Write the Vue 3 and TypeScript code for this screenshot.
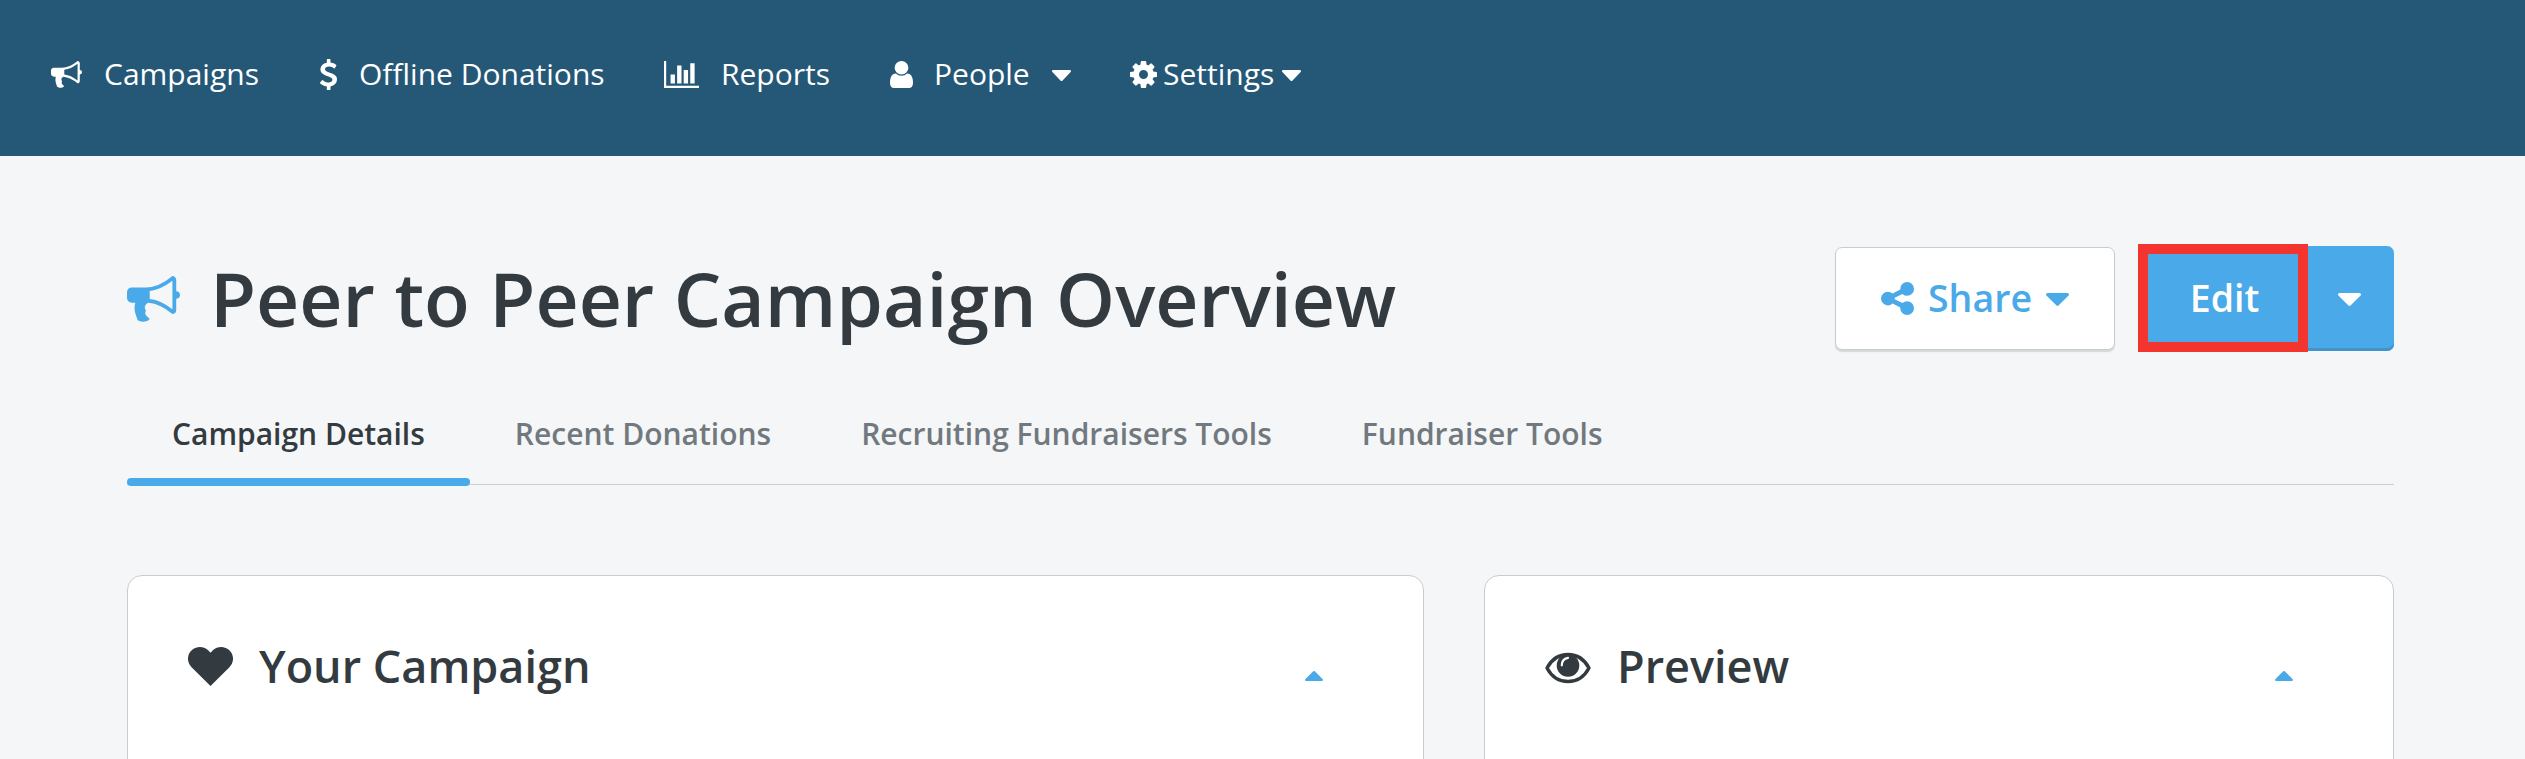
<script setup lang="ts">
interface Glyph {
  box: string
  path: string
}

const glyphs: Record<string, Glyph> = {
  bullhorn: {
    box: '0 128 1792 1546',
    path: 'M1664 640q53 0 90.5 37.5t37.5 90.5-37.5 90.5-90.5 37.5v384q0 52-38 90t-90 38q-417-347-812-380-58 19-91 66t-31 100.5 40 92.5q-20 33-23 65.5t6 58 33.5 55 48 50 61.5 50.5q-29 58-111.5 83t-168.5 11.5-132-55.5q-7-23-29.5-87.5t-32-94.5-23-89-15-101 3.5-98.5 22-110.5h-122q-66 0-113-47t-47-113v-192q0-66 47-113t113-47h480q435 0 896-384 52 0 90 38t38 90v384zm-128 604v-954q-394 302-768 343v270q377 42 768 341z',
  },
  dollar: {
    box: '430 0 932 1792',
    path: 'M1362 1185q0 153-99.5 263.5t-258.5 136.5v175q0 14-9 23t-23 9h-135q-13 0-22.5-9.5t-9.5-22.5v-175q-66-9-127.5-31t-101.5-44.5-74-48-46.5-37.5-17.5-18q-17-21-2-41l103-135q7-10 23-12 15-2 24 9l2 2q113 99 243 125 37 8 74 8 81 0 142.5-43t61.5-122q0-28-15-53t-33.5-42-58.5-37.5-66-32-80-32.5q-39-16-61.5-25t-61.5-26.5-62.5-31-56.5-35.5-53.5-42.5-43.5-49-35.5-58-21-66.5-8.5-78q0-138 98-242t255-134v-180q0-13 9.5-22.5t22.5-9.5h135q14 0 23 9t9 23v176q57 6 110.5 23t87 33.5 63.5 37.5 39 29 15 14q17 18 5 38l-81 146q-8 15-23 16-14 3-27-7-3-3-14.5-12t-39-26.5-58.5-32-74.5-26-85.5-11.5q-95 0-155 43t-60 111q0 26 8.5 48t29.5 41.5 39.5 33 56 31 60.5 27 70 27.5q53 20 81 31.5t76 35 75.5 42.5 62 50 53 63.5 31.5 76.5 13 94z',
  },
  chart: {
    box: '0 128 2048 1536',
    path: 'M640 896v512h-256v-512h256zm384-512v1024h-256v-1024h256zm1024 1152v128h-2048v-1536h128v1408h1920zm-640-896v768h-256v-768h256zm384-384v1152h-256v-1152h256z',
  },
  user: {
    box: '256 128 1280 1536',
    path: 'M1536 1399q0 109-62.5 187t-150.5 78h-854q-88 0-150.5-78t-62.5-187q0-85 8.5-160.5t31.5-152 58.5-131 94-89 134.5-34.5q131 128 313 128t313-128q76 0 134.5 34.5t94 89 58.5 131 31.5 152 8.5 160.5zm-256-887q0 159-112.5 271.5t-271.5 112.5-271.5-112.5-112.5-271.5 112.5-271.5 271.5-112.5 271.5 112.5 112.5 271.5z',
  },
  cog: {
    box: '128 128 1536 1536',
    path: 'M1152 896q0-106-75-181t-181-75-181 75-75 181 75 181 181 75 181-75 75-181zm512-109v222q0 12-8 23t-20 13l-185 28q-19 54-39 91 35 50 107 138 10 12 10 25t-9 23q-27 37-99 108t-94 71q-12 0-26-9l-138-108q-44 23-91 38-16 136-29 186-7 28-36 28h-222q-14 0-24.5-8.5t-11.5-21.5l-28-184q-49-16-90-37l-141 107q-10 9-25 9-14 0-25-11-126-114-165-168-7-10-7-23 0-12 8-23 15-21 51-66.5t54-70.5q-27-50-41-99l-183-27q-13-2-21-12.5t-8-23.5v-222q0-12 8-23t19-13l186-28q14-46 39-92-40-57-107-138-10-12-10-24 0-10 9-23 26-36 98.5-107.5t94.5-71.5q13 0 26 10l138 107q44-23 91-38 16-136 29-186 7-28 36-28h222q14 0 24.5 8.5t11.5 21.5l28 184q49 16 90 37l142-107q9-9 24-9 13 0 25 10 129 119 165 170 7 8 7 22 0 12-8 23-15 21-51 66.5t-54 70.5q26 50 41 98l183 28q13 2 21 12.5t8 23.5z',
  },
  share: {
    box: '128 128 1536 1536',
    path: 'M1344 1024q133 0 226.5 93.5t93.5 226.5-93.5 226.5-226.5 93.5-226.5-93.5-93.5-226.5q0-12 2-34l-360-180q-92 86-218 86-133 0-226.5-93.5t-93.5-226.5 93.5-226.5 226.5-93.5q126 0 218 86l360-180q-2-22-2-34 0-133 93.5-226.5t226.5-93.5 226.5 93.5 93.5 226.5-93.5 226.5-226.5 93.5q-126 0-218-86l-360 180q2 22 2 34t-2 34l360 180q92-86 218-86z',
  },
  down: {
    box: '384 640 1024 576',
    path: 'M1408 704q0 26-19 45l-448 448q-19 19-45 19t-45-19l-448-448q-19-19-19-45t19-45 45-19h896q26 0 45 19t19 45z',
  },
  up: {
    box: '384 704 1024 576',
    path: 'M1408 1216q0 26-19 45t-45 19h-896q-26 0-45-19t-19-45 19-45l448-448q19-19 45-19t45 19l448 448q19 19 19 45z',
  },
}

interface NavItem {
  id: string
  label: string
  icon: string
  caret?: boolean
}

const nav: NavItem[] = [
  { id: 'campaigns', label: 'Campaigns', icon: 'bullhorn' },
  { id: 'donations', label: 'Offline Donations', icon: 'dollar' },
  { id: 'reports', label: 'Reports', icon: 'chart' },
  { id: 'people', label: 'People', icon: 'user', caret: true },
  { id: 'settings', label: 'Settings', icon: 'cog', caret: true },
]

const tabs: string[] = ['Campaign Details', 'Recent Donations', 'Recruiting Fundraisers Tools', 'Fundraiser Tools']
</script>

<template>
  <div class="page">
    <header class="topbar">
      <a v-for="item in nav" :key="item.id" class="nav-item" :class="item.id">
        <svg class="nav-icon" :viewBox="glyphs[item.icon].box" preserveAspectRatio="none"><path :d="glyphs[item.icon].path" /></svg>
        <span class="nav-label">{{ item.label }}</span>
        <svg v-if="item.caret" class="nav-caret" :viewBox="glyphs.down.box" preserveAspectRatio="none"><path :d="glyphs.down.path" /></svg>
      </a>
    </header>

    <main class="content">
      <div class="title-row">
        <svg class="title-icon" :viewBox="glyphs.bullhorn.box" preserveAspectRatio="none"><path :d="glyphs.bullhorn.path" /></svg>
        <h1>Peer to Peer Campaign Overview</h1>
        <button class="share">
          <svg class="share-icon" :viewBox="glyphs.share.box"><path :d="glyphs.share.path" /></svg>
          <span>Share</span>
          <svg class="btn-caret" :viewBox="glyphs.down.box"><path :d="glyphs.down.path" /></svg>
        </button>
        <div class="split">
          <button class="edit">Edit</button>
          <button class="more">
            <svg class="btn-caret" :viewBox="glyphs.down.box"><path :d="glyphs.down.path" /></svg>
          </button>
        </div>
      </div>

      <nav class="tabs">
        <a v-for="(tab, i) in tabs" :key="tab" class="tab" :class="{ active: i === 0 }"><span>{{ tab }}</span></a>
      </nav>

      <div class="cards">
        <section class="card">
          <svg class="heart" viewBox="0 0 45 39"><path d="M22.5 39 3.8 20.4C-1.2 15.5-1.2 8.4 3.2 3.8 7.8-.9 15.2-1.2 19.9 3.1L22.5 5.7 25.1 3.1C29.8-1.2 37.2-.9 41.8 3.8 46.2 8.4 46.2 15.5 41.2 20.4Z" /></svg>
          <h2>Your Campaign</h2>
          <svg class="collapse" :viewBox="glyphs.up.box"><path :d="glyphs.up.path" /></svg>
        </section>
        <section class="card">
          <svg class="eye" viewBox="0 0 46 32">
            <path class="eye-line" d="M2 16C6.5 7.500 14 2.500 23 2.500S39.500 7.500 44 16C39.500 24.500 32 29.500 23 29.500S6.500 24.500 2 16Z" />
            <circle cx="23" cy="13.500" r="11.300" />
            <path class="eye-glint" d="M16.800 13.300C16.800 9.400 19.400 6.500 23 5.800" />
          </svg>
          <h2>Preview</h2>
          <svg class="collapse" :viewBox="glyphs.up.box"><path :d="glyphs.up.path" /></svg>
        </section>
      </div>
    </main>
  </div>
</template>

<style>
body {
  margin: 0;
  background: #f4f6f8;
}
</style>

<style scoped>
.page {
  width: 2525px;
  height: 759px;
  overflow: hidden;
  background: #f4f6f8;
  color: #333b40;
  font-family: "Open Sans", sans-serif;
}
svg {
  display: block;
  flex: none;
  fill: currentColor;
}
.topbar {
  display: flex;
  align-items: center;
  box-sizing: border-box;
  height: 156px;
  padding: 0 0 8px 51px;
  background: #255877;
  color: #fff;
  font-size: 30px;
}
.nav-item {
  display: flex;
  flex: none;
  align-items: center;
  height: 60px;
}
.nav-label {
  flex: none;
  line-height: 42px;
  white-space: nowrap;
}
.nav-caret {
  width: 19px;
  height: 11px;
  margin-top: 2px;
}
.nav-icon {
  height: 27px;
}
.campaigns { width: 269px; }
.campaigns .nav-icon { width: 31px; margin-right: 22px; }
.donations { width: 344px; }
.donations .nav-icon { width: 17px; height: 31px; margin-right: 22px; }
.reports { width: 226px; }
.reports .nav-icon { width: 35px; margin-right: 22px; }
.people { width: 240px; }
.people .nav-icon { width: 23px; margin-right: 21px; }
.people .nav-caret { margin-left: 22px; }
.settings .nav-icon { width: 27px; margin-right: 6px; }
.settings .nav-caret { margin-left: 8px; }

.content {
  padding: 89px 131px 0 127px;
}
.title-row {
  display: flex;
  align-items: center;
  height: 106px;
}
.title-icon {
  width: 53px;
  height: 46px;
  margin: 2px 30px 0 0;
  color: #4aa9e8;
}
h1 {
  flex: 1;
  margin: 0;
  font-size: 75px;
  font-weight: 600;
  line-height: 104px;
  white-space: nowrap;
}
button {
  display: flex;
  align-items: center;
  box-sizing: border-box;
  padding: 0;
  border: 0;
  font-family: inherit;
  font-size: 37.5px;
  font-weight: 600;
  line-height: 52px;
}
.share {
  width: 280px;
  height: 103px;
  margin-right: 23px;
  padding-left: 45px;
  border: 1px solid #c9cccf;
  border-radius: 7px;
  background: #fff;
  box-shadow: 0 2px 1px #d5d9d9;
  color: #4aa9e8;
}
.share-icon {
  width: 33px;
  height: 33px;
  margin: 1px 14px 0 0;
}
.share .btn-caret { margin-left: 14px; }
.btn-caret {
  width: 23px;
  height: 13px;
  margin-top: 3px;
}
.split {
  display: flex;
  align-items: center;
}
.edit {
  justify-content: center;
  width: 170px;
  height: 108px;
  padding-left: 3px;
  border: 10px solid #f4342f;
  background: #4aa9e8;
  color: #fff;
}
.more {
  justify-content: center;
  width: 86px;
  height: 105px;
  padding-right: 3px;
  border-radius: 0 7px 7px 0;
  background: #4aa9e8;
  box-shadow: inset 0 -3px #4293c9;
  color: #fff;
}
.tabs {
  display: flex;
  height: 133px;
  border-bottom: 1px solid #cdcfd3;
}
.tab {
  display: flex;
  flex: none;
  box-sizing: border-box;
  height: 135px;
  padding: 62px 45px 0;
  color: #71797e;
  font-size: 30px;
  font-weight: 600;
  line-height: 42px;
  white-space: nowrap;
}
.active {
  flex-direction: column;
  color: #333b40;
}
.active::after {
  height: 8px;
  margin: 23px -45px 0;
  border-radius: 4px;
  background: #4aa9e8;
  content: "";
}
.cards {
  display: grid;
  grid-template-columns: 1297px 910px;
  gap: 60px;
  margin-top: 90px;
}
.card {
  display: flex;
  align-items: center;
  box-sizing: border-box;
  height: 260px;
  padding: 0 100px 78px 60px;
  border: 1px solid #c9cccf;
  border-radius: 15px;
  background: #fff;
}
.heart {
  width: 45px;
  height: 39px;
  margin-right: 26px;
}
.eye {
  width: 46px;
  height: 32px;
  margin: 4px 26px 0 0;
}
.eye-line {
  fill: none;
  stroke: currentColor;
  stroke-width: 3.4;
  stroke-linejoin: round;
}
.eye-glint {
  fill: none;
  stroke: #fff;
  stroke-width: 2.2;
  stroke-linecap: round;
}
h2 {
  flex: 1;
  margin: 0;
  font-size: 45px;
  font-weight: 600;
  line-height: 62px;
}
.collapse {
  width: 18px;
  height: 10px;
  margin-top: 20px;
  color: #4aa9e8;
}
</style>
